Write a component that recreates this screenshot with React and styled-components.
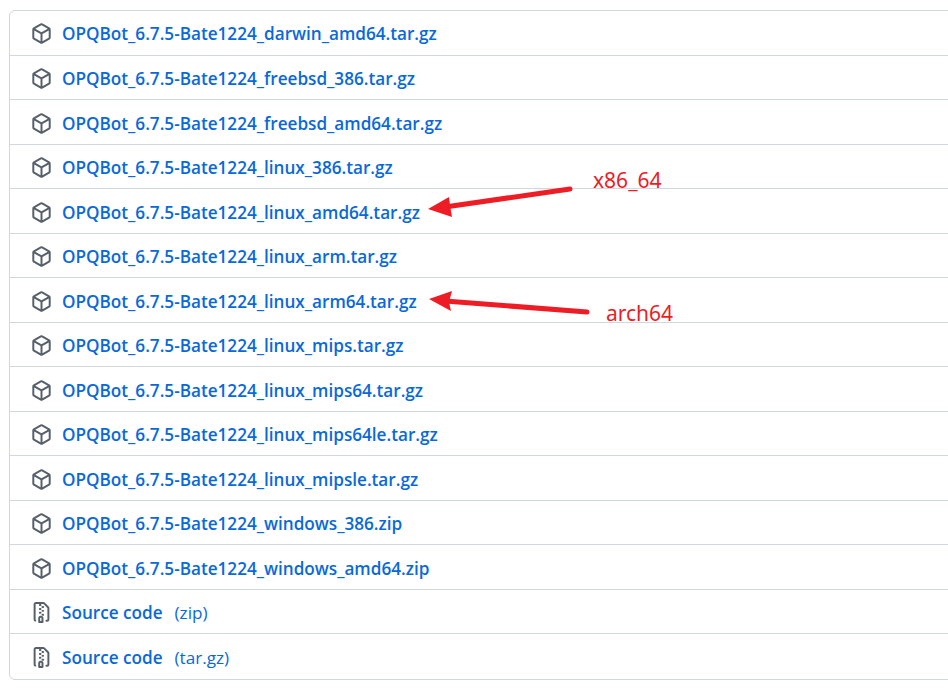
import React from "react";
import styled, { createGlobalStyle } from "styled-components";

const files = [
	"darwin_amd64.tar.gz",
	"freebsd_386.tar.gz",
	"freebsd_amd64.tar.gz",
	"linux_386.tar.gz",
	"linux_amd64.tar.gz",
	"linux_arm.tar.gz",
	"linux_arm64.tar.gz",
	"linux_mips.tar.gz",
	"linux_mips64.tar.gz",
	"linux_mips64le.tar.gz",
	"linux_mipsle.tar.gz",
	"windows_386.zip",
	"windows_amd64.zip",
];

const PackageIcon = () => (
	<Icon viewBox="0 0 16 16">
		<path d="m8.878.392 5.25 3.045c.54.314.872.89.872 1.514v6.098a1.75 1.75 0 0 1-.872 1.514l-5.25 3.045a1.75 1.75 0 0 1-1.756 0l-5.25-3.045A1.75 1.75 0 0 1 1 11.049V4.951c0-.624.332-1.201.872-1.514L7.122.392a1.75 1.75 0 0 1 1.756 0ZM7.875 1.69l-4.63 2.685L8 7.133l4.755-2.758-4.63-2.685a.248.248 0 0 0-.25 0ZM2.5 5.677v5.372c0 .09.047.171.125.216l4.625 2.683V8.432Zm6.25 8.271 4.625-2.683a.25.25 0 0 0 .125-.216V5.677L8.75 8.432Z" />
	</Icon>
);

const ZipIcon = () => (
	<Icon viewBox="0 0 16 16">
		<path d="M3.5 1.75v11.5c0 .09.048.173.126.217a.75.75 0 0 1-.752 1.298A1.748 1.748 0 0 1 2 13.25V1.75C2 .784 2.784 0 3.75 0h5.586c.464 0 .909.185 1.237.513l2.914 2.914c.329.328.513.773.513 1.237v8.586A1.75 1.75 0 0 1 12.25 15h-.5a.75.75 0 0 1 0-1.5h.5a.25.25 0 0 0 .25-.25V4.664a.25.25 0 0 0-.073-.177L9.513 1.573a.25.25 0 0 0-.177-.073H7.25a.75.75 0 0 1 0 1.5h-.5a.75.75 0 0 1 0-1.5h-3a.25.25 0 0 0-.25.25Zm3.75 8.75h.5c.966 0 1.75.784 1.75 1.75v3a.75.75 0 0 1-.75.75h-2.5a.75.75 0 0 1-.75-.75v-3c0-.966.784-1.75 1.75-1.75ZM6 5.25a.75.75 0 0 1 .75-.75h.5a.75.75 0 0 1 0 1.5h-.5A.75.75 0 0 1 6 5.25Zm.75 2.25h.5a.75.75 0 0 1 0 1.5h-.5a.75.75 0 0 1 0-1.5ZM8 6.75A.75.75 0 0 1 8.75 6h.5a.75.75 0 0 1 0 1.5h-.5A.75.75 0 0 1 8 6.75ZM8.75 3h.5a.75.75 0 0 1 0 1.5h-.5a.75.75 0 0 1 0-1.5ZM8 9.75A.75.75 0 0 1 8.75 9h.5a.75.75 0 0 1 0 1.5h-.5A.75.75 0 0 1 8 9.75Zm-1 2.5v2.25h1v-2.25a.25.25 0 0 0-.25-.25h-.5a.25.25 0 0 0-.25.25Z" />
	</Icon>
);

const App = () => {
	return (
		<Page>
			<GlobalStyle />
			<Assets>
				{files.map((name) => (
					<Row key={name}>
						<PackageIcon />
						<FileLink href="#">OPQBot_6.7.5-Bate1224_{name}</FileLink>
					</Row>
				))}
				<Row>
					<ZipIcon />
					<FileLink href="#">Source code</FileLink>
					<Ext>(zip)</Ext>
				</Row>
				<Row>
					<ZipIcon />
					<FileLink href="#">Source code</FileLink>
					<Ext>(tar.gz)</Ext>
				</Row>
			</Assets>
			<Arrows viewBox="0 0 948 699">
				<line x1="570" y1="189" x2="445" y2="207" />
				<polygon points="428,209 449,197 450,205 452,217" />
				<line x1="587" y1="312" x2="445" y2="301" />
				<polygon points="429,299 452,291 449,302 451,311" />
			</Arrows>
			<Note $left={593} $top={166}>x86_64</Note>
			<Note $left={606} $top={299}>arch64</Note>
		</Page>
	);
};

export default App;

const GlobalStyle = createGlobalStyle`
	html, body {
		margin: 0;
		padding: 0;
		background: #fff;
		overflow: hidden;
	}
`;

const Page = styled.div`
	position: relative;
	width: 948px;
	height: 699px;
	overflow: hidden;
	padding: 10px 0 0 9px;
	box-sizing: border-box;
	font-family: "Open Sans", "Noto Sans", sans-serif;
`;

const Assets = styled.ul`
	list-style: none;
	margin: 0;
	padding: 0;
	width: 960px;
	border: 1px solid #d0d7de;
	border-radius: 6px;
`;

const Row = styled.li`
	display: flex;
	align-items: center;
	height: 44.5px;
	box-sizing: border-box;
	padding: 2.4px 0 0 21px;
	border-top: 1px solid #d0d7de;
	&:first-child {
		border-top: none;
		height: 43.9px;
		padding-top: 2px;
	}
	&:last-child {
		height: 46px;
		padding-top: 1px;
	}
`;

const Icon = styled.svg`
	flex: none;
	width: 21px;
	height: 21px;
	margin-right: 10px;
	fill: #57606a;
`;

const FileLink = styled.a`
	font-size: 17.15px;
	font-weight: 600;
	line-height: 24px;
	padding-top: 1px;
	color: #0969da;
	text-decoration: none;
	white-space: nowrap;
`;

const Ext = styled.span`
	margin-left: 12px;
	font-size: 17.15px;
	line-height: 24px;
	padding-top: 1px;
	color: #0969da;
`;

const Arrows = styled.svg`
	position: absolute;
	left: 0;
	top: 0;
	width: 948px;
	height: 699px;
	pointer-events: none;
	line {
		stroke: #ee1c25;
		stroke-width: 5px;
		stroke-linecap: round;
	}
	polygon {
		fill: #ee1c25;
	}
`;

const Note = styled.span`
	position: absolute;
	left: ${(props) => props.$left}px;
	top: ${(props) => props.$top}px;
	font-family: "Noto Sans", sans-serif;
	font-size: 21px;
	line-height: 28px;
	color: #ee1c25;
`;
